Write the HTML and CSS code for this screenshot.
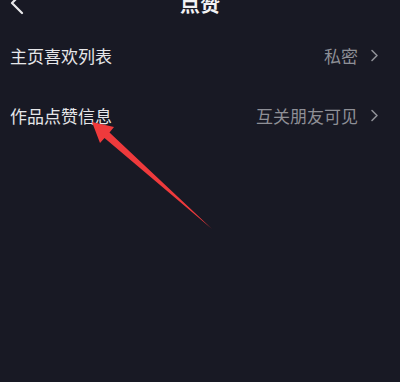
FILE: index.html
```html
<!DOCTYPE html>
<html lang="zh-CN">
<head>
<meta charset="utf-8">
<title>点赞</title>
<link rel="stylesheet" href="styles.css">
</head>
<body>
<div class="screen">
  <header class="topbar">
    <span class="back">
      <svg width="16" height="24" viewBox="0 0 16 24"><polyline points="13,2 3,12 13,22" fill="none" stroke="#e8e8ea" stroke-width="2.2" stroke-linecap="round" stroke-linejoin="round"/></svg>
    </span>
    <h1 class="title">点赞</h1>
  </header>
  <ul class="list">
    <li class="row">
      <span class="label">主页喜欢列表</span>
      <span class="value">私密<svg class="chev" width="9" height="13" viewBox="0 0 9 13"><polyline points="2,1.5 7,6.5 2,11.5" fill="none" stroke="#8e8f96" stroke-width="1.6" stroke-linecap="round" stroke-linejoin="round"/></svg></span>
    </li>
    <li class="row">
      <span class="label">作品点赞信息</span>
      <span class="value">互关朋友可见<svg class="chev" width="9" height="13" viewBox="0 0 9 13"><polyline points="2,1.5 7,6.5 2,11.5" fill="none" stroke="#8e8f96" stroke-width="1.6" stroke-linecap="round" stroke-linejoin="round"/></svg></span>
    </li>
  </ul>
  <svg class="arrow" width="400" height="382" viewBox="0 0 400 382">
    <polygon points="92,122 114,127 109.5,132.5 212,229 104.5,138 100,143" fill="#ee3a3c"/>
  </svg>
</div>
</body>
</html>
```

FILE: styles.css
```css
html, body {
  margin: 0;
  padding: 0;
  background: #181924;
}
.screen {
  position: relative;
  width: 400px;
  height: 382px;
  overflow: hidden;
  background: #181924;
  font-family: "Noto Sans CJK SC", "Noto Sans", sans-serif;
}
.topbar {
  display: flex;
  align-items: center;
  justify-content: center;
  position: relative;
  height: 45px;
  margin-top: -20px;
}
.back {
  position: absolute;
  left: 9px;
  top: 11px;
  display: flex;
}
.title {
  margin: 0;
  font-size: 20px;
  font-weight: 700;
  color: #f2f2f4;
  line-height: 1;
  position: relative;
  top: 1px;
}
.list {
  list-style: none;
  margin: 0;
  padding: 0;
}
.row {
  height: 60px;
  display: flex;
  align-items: center;
  justify-content: space-between;
  padding: 0 21px 0 10px;
}
.label {
  font-size: 17px;
  color: #e6e6e9;
}
.value {
  display: flex;
  align-items: center;
  font-size: 17px;
  color: #8e8f96;
}
.chev {
  margin-left: 12px;
}
.arrow {
  position: absolute;
  left: 0;
  top: 0;
}
```
